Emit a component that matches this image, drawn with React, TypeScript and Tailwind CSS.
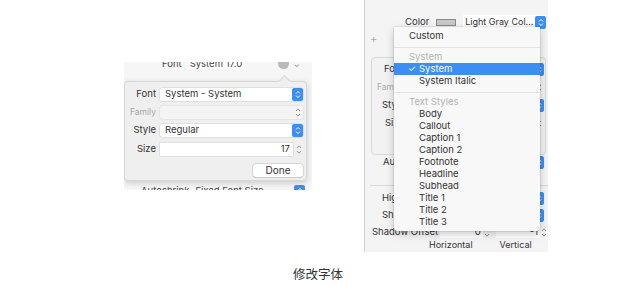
import React from "react";

const F = { fontFamily: '"Inter", "Noto Sans CJK SC", sans-serif' } as React.CSSProperties;

function BlueStep({ className = "" }: { className?: string }) {
  return (
    <div className={`shrink-0 w-[11px] h-[13px] rounded-[2px] bg-[#3d8ef2] flex flex-col items-center justify-center ${className}`}>
      <svg width="6" height="9" viewBox="0 0 6 9">
        <path d="M1 3.5 L3 1.5 L5 3.5 M1 5.5 L3 7.5 L5 5.5" stroke="white" strokeWidth="1" fill="none" />
      </svg>
    </div>
  );
}

function GrayStep({ className = "" }: { className?: string }) {
  return (
    <div className={`shrink-0 w-[8px] h-[13px] flex items-center justify-center ${className}`}>
      <svg width="6" height="11" viewBox="0 0 6 11">
        <path d="M1 4 L3 1.8 L5 4 M1 7 L3 9.2 L5 7" stroke="#8a8a8a" strokeWidth="0.9" fill="none" />
      </svg>
    </div>
  );
}

function LeftShot() {
  return (
    <div className="relative w-[188px] h-[128px] overflow-hidden bg-[#f6f6f6] whitespace-nowrap">
      <div className="flex items-center h-[10px] -mt-[3px] pl-[38px] gap-[6px] text-[9.5px] text-[#444]">
        <span>Font</span>
        <span className="bg-white px-[2px] leading-[10px]">System 17.0</span>
      </div>
      <div className="absolute left-[154px] top-[-4px] w-[11px] h-[11px] rounded-full bg-[#b9b9b9]" />
      <div className="absolute left-[170px] top-[-2px] text-[7px] text-[#777]">⌄</div>
      <div className="absolute left-0 top-[19px] w-[183px] h-[100px] bg-[#efefef] border border-[#d6d6d6] rounded-[4px] shadow-[0_2px_6px_rgba(0,0,0,0.18)] flex flex-col pt-[6px] pr-[3px] text-[9.5px] text-[#333]">
        <div className="absolute left-[155px] -top-[5px] w-[9px] h-[9px] rotate-45 bg-[#efefef] border-l border-t border-[#d6d6d6]" />
        <div className="flex items-center h-[13px] mb-[5px]">
          <span className="w-[32px] text-right pr-[1px]">Font</span>
          <div className="ml-[3px] flex-1 h-[13px] bg-white rounded-[2px] shadow-[0_0_0_0.5px_#d0d0d0] flex items-center justify-between pl-[5px]">
            <span>System - System</span>
            <BlueStep />
          </div>
        </div>
        <div className="flex items-center h-[13px] mb-[5px]">
          <span className="w-[32px] text-right pr-[1px] text-[#a5a5a5] text-[8.5px]">Family</span>
          <div className="ml-[3px] flex-1 h-[13px] bg-[#f4f4f4] rounded-[2px] shadow-[0_0_0_0.5px_#dcdcdc] flex items-center justify-end pr-[1px]">
            <GrayStep />
          </div>
        </div>
        <div className="flex items-center h-[13px] mb-[6px]">
          <span className="w-[32px] text-right pr-[1px]">Style</span>
          <div className="ml-[3px] flex-1 h-[13px] bg-white rounded-[2px] shadow-[0_0_0_0.5px_#d0d0d0] flex items-center justify-between pl-[5px]">
            <span>Regular</span>
            <BlueStep />
          </div>
        </div>
        <div className="flex items-center h-[13px] mb-[8px]">
          <span className="w-[32px] text-right pr-[1px]">Size</span>
          <div className="ml-[3px] flex-1 h-[13px] bg-white shadow-[0_0_0_0.5px_#d0d0d0] flex items-center justify-end pr-[3px]">
            <span>17</span>
          </div>
          <GrayStep className="ml-[2px]" />
        </div>
        <div className="flex justify-end">
          <div className="w-[50px] h-[13px] rounded-[3px] bg-white shadow-[0_0_0_0.5px_#bdbdbd,0_1px_1px_rgba(0,0,0,0.12)] flex items-center justify-center text-[10px]">
            Done
          </div>
        </div>
      </div>
      <div className="absolute left-[0px] top-[122px] flex items-center gap-[6px] pl-[17px] text-[9.5px] text-[#444]">
        <span>Autoshrink</span>
        <span>Fixed Font Size</span>
      </div>
      <div className="absolute left-[170px] top-[123px]">
        <BlueStep />
      </div>
    </div>
  );
}

const items = ["Body", "Callout", "Caption 1", "Caption 2", "Footnote", "Headline", "Subhead", "Title 1", "Title 2", "Title 3"];

function RightShot() {
  return (
    <div className="relative w-[184px] h-[252px] bg-[#f4f4f4] border-l border-[#d0d0d0] text-[9.5px] text-[#333] flex flex-col whitespace-nowrap">
      <div className="flex items-center h-[14px] mt-[15px] pl-[40px]">
        <span>Color</span>
        <div className="ml-[7px] w-[20px] h-[7px] bg-[#c8c8c8] border border-[#8a8a8a]" />
        <div className="ml-[7px] w-[83px] h-[14px] bg-white flex items-center justify-between pl-[2px]">
          <span className="text-[9px]">Light Gray Col...</span>
          <BlueStep />
        </div>
      </div>
      <div className="pl-[5px] mt-[5px] text-[11px] text-[#aaa] leading-[10px]">+</div>
      <div className="ml-[6px] mt-[13px] w-[175px] h-[98px] border border-[#d8d8d8] rounded-[4px] bg-[#f2f2f2] flex flex-col pt-[5px]">
        <div className="flex items-center h-[13px] mb-[5px] justify-between pl-[12px]"><span>Font</span><BlueStep className="mr-[1px]" /></div>
        <div className="flex items-center h-[13px] mb-[5px] justify-between pl-[5px]"><span className="text-[#aaa] text-[8.5px]">Family</span><GrayStep className="mr-[2px]" /></div>
        <div className="flex items-center h-[13px] mb-[5px] justify-between pl-[10px]"><span>Style</span><BlueStep className="mr-[1px]" /></div>
        <div className="flex items-center h-[13px] mb-[5px] justify-between pl-[13px]"><span>Size</span><GrayStep className="mr-[2px]" /></div>
      </div>
      <div className="flex items-center h-[13px] mt-[1px] pl-[18px] justify-between pr-[4px]"><span>Autoshrink</span><BlueStep /></div>
      <div className="ml-[5px] mt-[16px] h-px bg-[#dadada]" />
      <div className="flex items-center h-[13px] mt-[6px] pl-[17px] justify-between pr-[4px]"><span>Highlighted</span><BlueStep /></div>
      <div className="flex items-center h-[13px] mt-[4px] pl-[17px] justify-between pr-[4px]"><span>Shadow</span><BlueStep /></div>
      <div className="flex items-center h-[12px] mt-[4px] pl-[7px]">
        <span>Shadow Offset</span>
        <div className="ml-[2px] w-[44px] h-[12px] bg-white flex items-center justify-end pr-[2px]">0</div>
        <GrayStep />
        <div className="ml-[5px] w-[46px] h-[12px] bg-white flex items-center justify-end pr-[2px]">-1</div>
        <GrayStep />
      </div>
      <div className="flex items-center mt-[1px] text-[9px] leading-[11px]">
        <span className="ml-[64px]">Horizontal</span>
        <span className="ml-[27px]">Vertical</span>
      </div>
      <div className="absolute left-[29px] top-[27px] w-[146px] bg-[#f8f8f8] rounded-b-[4px] shadow-[0_3px_8px_rgba(0,0,0,0.22),0_0_0_0.5px_rgba(0,0,0,0.12)] flex flex-col pt-[3px] pb-[3px] text-[9.5px] text-[#333]">
        <div className="h-[12px] flex items-center pl-[15px]">Custom</div>
        <div className="mt-[5px] mb-[3px] h-px bg-[#e2e2e2]" />
        <div className="h-[12px] flex items-center pl-[15px] text-[#b3b3b3]">System</div>
        <div className="h-[12px] flex items-center pl-[14px] bg-[#3d8ef2] text-white">
          <span className="w-[11px] text-[9px]">✓</span>
          <span>System</span>
        </div>
        <div className="h-[12px] flex items-center pl-[25px]">System Italic</div>
        <div className="mt-[5px] mb-[3px] h-px bg-[#e2e2e2]" />
        <div className="h-[12px] flex items-center pl-[15px] text-[#b3b3b3]">Text Styles</div>
        {items.map((t) => (
          <div key={t} className="h-[12px] flex items-center pl-[25px]">{t}</div>
        ))}
      </div>
    </div>
  );
}

export default function App() {
  return (
    <div style={F} className="w-[640px] h-[295px] bg-white overflow-hidden flex flex-col">
      <div className="flex items-start h-[260px]">
        <div className="ml-[124px] mt-[62px]">
          <LeftShot />
        </div>
        <div className="ml-[52px]">
          <RightShot />
        </div>
      </div>
      <div className="text-center text-[12.5px] text-[#333] mt-[5px] mr-[4px]" style={{ fontFamily: '"Noto Sans CJK SC", sans-serif' }}>
        修改字体
      </div>
    </div>
  );
}
